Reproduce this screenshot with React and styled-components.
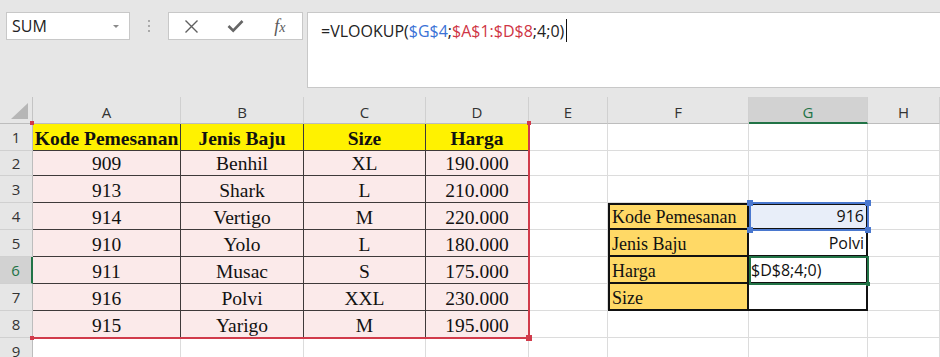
import React from 'react';
import styled, { createGlobalStyle, css } from 'styled-components';

const GlobalStyle = createGlobalStyle`
  body {
    margin: 0;
    background: #ffffff;
    overflow: hidden;
  }
  * {
    box-sizing: border-box;
  }
`;

const COLUMNS = ['A', 'B', 'C', 'D', 'E', 'F', 'G', 'H'];
const COL_WIDTHS = [148, 123, 122, 103, 79, 141, 119];
const ROW_HEIGHTS = [27, 25, 27, 27, 27, 27, 27, 27, 27];
const ACTIVE_COL = 'G';
const ACTIVE_ROW = 6;

const HEADERS = ['Kode Pemesanan', 'Jenis Baju', 'Size', 'Harga'];
const ORDERS = [
  ['909', 'Benhil', 'XL', '190.000'],
  ['913', 'Shark', 'L', '210.000'],
  ['914', 'Vertigo', 'M', '220.000'],
  ['910', 'Yolo', 'L', '180.000'],
  ['911', 'Musac', 'S', '175.000'],
  ['916', 'Polvi', 'XXL', '230.000'],
  ['915', 'Yarigo', 'M', '195.000'],
];

// lookup block sits in F4:G7
const LOOKUP = [
  { label: 'Kode Pemesanan', value: '916', align: 'right' },
  { label: 'Jenis Baju', value: 'Polvi', align: 'right' },
  { label: 'Harga', value: '$D$8;4;0)', align: 'left' },
  { label: 'Size', value: '', align: 'right' },
];
const LOOKUP_START = 4;

// sheet row n -> grid row n + 1, column index i -> grid column i + 2
const placed = css`
  grid-row: ${(p) => p.$r};
  grid-column: ${(p) => p.$c};
`;

export default function App() {
  const renderCell = (row, colIndex) => {
    const col = COLUMNS[colIndex];
    const pos = { key: `${col}${row}`, $r: row + 1, $c: colIndex + 2 };

    if (colIndex < 4 && row === 1) {
      return <HeadCell {...pos}>{HEADERS[colIndex]}</HeadCell>;
    }
    if (colIndex < 4 && row <= 8) {
      return <DataCell {...pos}>{ORDERS[row - 2][colIndex]}</DataCell>;
    }

    const lookupIndex = row - LOOKUP_START;
    if (lookupIndex >= 0 && lookupIndex < LOOKUP.length) {
      const item = LOOKUP[lookupIndex];
      if (col === 'F') {
        return (
          <LabelCell {...pos} $first={lookupIndex === 0}>
            {item.label}
          </LabelCell>
        );
      }
      if (col === 'G') {
        return (
          <ValueCell
            {...pos}
            $first={lookupIndex === 0}
            $align={item.align}
            $selected={lookupIndex === 0}
          >
            {item.value}
          </ValueCell>
        );
      }
    }

    return <GridCell {...pos} />;
  };

  return (
    <Page>
      <GlobalStyle />
      <FormulaBar>
        <NameBox>
          SUM
          <DropArrow />
        </NameBox>
        <Grip>
          <span />
          <span />
          <span />
        </Grip>
        <ActionBox>
          <ActionSlot aria-label="Batal">
            <svg width="15" height="15" viewBox="0 0 15 15">
              <path d="M1.5 1.5 L13.5 13.5 M13.5 1.5 L1.5 13.5" stroke="#5f5f5f" strokeWidth="1.4" fill="none" />
            </svg>
          </ActionSlot>
          <ActionSlot aria-label="Masukkan">
            <svg width="17" height="14" viewBox="0 0 17 14">
              <path d="M1.5 7 L6.2 11.6 L15.5 2" stroke="#666666" strokeWidth="2.6" fill="none" />
            </svg>
          </ActionSlot>
          <ActionSlot aria-label="Sisipkan fungsi">
            <FxGlyph>
              f<sub>x</sub>
            </FxGlyph>
          </ActionSlot>
        </ActionBox>
        <FormulaBox>
          <FormulaText>
            =VLOOKUP(<Ref $color="#3a72d6">$G$4</Ref>;<Ref $color="#cf3545">$A$1:$D$8</Ref>;4;0)
            <Caret />
          </FormulaText>
        </FormulaBox>
      </FormulaBar>

      <Sheet>
        <Corner $r={1} $c={1}>
          <svg width="19" height="17" viewBox="0 0 19 17">
            <path d="M18 0 L18 16 L1 16 Z" fill="#b6b6b6" />
          </svg>
        </Corner>
        {COLUMNS.map((col, i) => (
          <ColHeader key={col} $r={1} $c={i + 2} $active={col === ACTIVE_COL}>
            {col}
          </ColHeader>
        ))}

        {ROW_HEIGHTS.map((_, i) => {
          const row = i + 1;
          return (
            <React.Fragment key={row}>
              <RowHeader $r={row + 1} $c={1} $active={row === ACTIVE_ROW}>
                {row}
              </RowHeader>
              {COLUMNS.map((_, colIndex) => renderCell(row, colIndex))}
            </React.Fragment>
          );
        })}

        <RangeFrame>
          <Handle $color="#d13b4b" $size={4} $v="top" $h="left" />
          <Handle $color="#d13b4b" $size={4} $v="top" $h="right" />
          <Handle $color="#d13b4b" $size={4} $v="bottom" $h="left" />
          <Handle $color="#d13b4b" $size={6} $v="bottom" $h="right" />
        </RangeFrame>

        <SelectFrame $row={LOOKUP_START + 1} $color="#4a78cf">
          <Handle $color="#4a78cf" $size={6} $v="top" $h="left" />
          <Handle $color="#4a78cf" $size={6} $v="top" $h="right" />
          <Handle $color="#4a78cf" $size={6} $v="bottom" $h="left" />
          <Handle $color="#4a78cf" $size={6} $v="bottom" $h="right" />
        </SelectFrame>

        <SelectFrame $row={ACTIVE_ROW + 1} $color="#217346">
          <Handle $color="#217346" $size={4} $v="bottom" $h="right" />
        </SelectFrame>
      </Sheet>
    </Page>
  );
}

const Page = styled.div`
  width: 940px;
  height: 357px;
  overflow: hidden;
  background: #ffffff;
`;

const FormulaBar = styled.div`
  display: flex;
  align-items: flex-start;
  height: 97px;
  padding: 12px 0 0 6px;
  background: #e6e6e6;
  font-family: 'Open Sans', 'Noto Sans', sans-serif;
`;

const NameBox = styled.div`
  position: relative;
  display: flex;
  align-items: center;
  width: 124px;
  height: 28px;
  padding: 0 0 1px 5px;
  background: #ffffff;
  border: 1px solid #c8c8c8;
  font-size: 16px;
  color: #222222;
`;

const DropArrow = styled.span`
  position: absolute;
  right: 10px;
  top: 12px;
  border-left: 3px solid transparent;
  border-right: 3px solid transparent;
  border-top: 3px solid #8a8a8a;
`;

const Grip = styled.div`
  display: flex;
  flex-direction: column;
  align-items: center;
  justify-content: center;
  gap: 3px;
  width: 38px;
  height: 28px;

  span {
    width: 2px;
    height: 2px;
    background: #a9a9a9;
  }
`;

const ActionBox = styled.div`
  display: flex;
  width: 135px;
  height: 28px;
  background: #ffffff;
  border: 1px solid #c8c8c8;
  margin-right: 4px;
`;

const ActionSlot = styled.div`
  display: flex;
  align-items: center;
  justify-content: center;
  width: 45px;
  height: 100%;
`;

const FxGlyph = styled.span`
  font-family: 'Liberation Serif', serif;
  font-style: italic;
  font-size: 18px;
  color: #5a5a5a;
  line-height: 1;

  sub {
    font-size: 14px;
    vertical-align: 0;
  }
`;

const FormulaBox = styled.div`
  flex: 1;
  height: 76px;
  margin-right: -2px;
  padding: 6px 13px;
  background: #ffffff;
  border: 1px solid #c8c8c8;
`;

const FormulaText = styled.div`
  display: flex;
  align-items: center;
  font-size: 16px;
  line-height: 22px;
  color: #222222;
  white-space: pre;
`;

const Ref = styled.span`
  color: ${(p) => p.$color};
`;

const Caret = styled.span`
  display: inline-block;
  width: 1px;
  height: 23px;
  margin-left: 2px;
  background: #111111;
`;

const Sheet = styled.div`
  display: grid;
  grid-template-columns: 33px ${COL_WIDTHS.map((w) => `${w}px`).join(' ')} 1fr;
  grid-template-rows: 27px ${ROW_HEIGHTS.map((h) => `${h}px`).join(' ')};
  background: #ffffff;
`;

const HeaderBase = styled.div`
  ${placed}
  display: flex;
  align-items: center;
  justify-content: center;
  font-family: 'Open Sans', 'Noto Sans', sans-serif;
  font-size: 15px;
  background: ${(p) => (p.$active ? '#d2d2d2' : '#e6e6e6')};
  color: ${(p) => (p.$active ? '#217346' : '#333333')};
`;

const Corner = styled.div`
  ${placed}
  display: flex;
  align-items: flex-end;
  justify-content: flex-end;
  padding: 0 3px 3px 0;
  background: #e6e6e6;
  border-right: 1px solid #c4c4c4;
  border-bottom: 1px solid #bdbdbd;
`;

const ColHeader = styled(HeaderBase)`
  padding-top: 4px;
  border-right: 1px solid #d0d0d0;
  border-bottom: ${(p) => (p.$active ? '2px solid #217346' : '1px solid #bdbdbd')};
`;

const RowHeader = styled(HeaderBase)`
  border-bottom: 1px solid #d0d0d0;
  border-right: ${(p) => (p.$active ? '2px solid #217346' : '1px solid #bdbdbd')};
`;

const GridCell = styled.div`
  ${placed}
  border-right: 1px solid #dcdcdc;
  border-bottom: 1px solid #dcdcdc;
`;

const TableCell = styled.div`
  ${placed}
  display: flex;
  align-items: flex-end;
  justify-content: center;
  overflow: hidden;
  white-space: nowrap;
  font-family: 'Liberation Serif', 'Times New Roman', serif;
  font-size: 19.5px;
  line-height: 1.15;
  color: #111111;
  border-right: 1px solid #3e3a3a;
  border-bottom: 1px solid #3e3a3a;
`;

const HeadCell = styled(TableCell)`
  font-weight: bold;
  background: #fff200;
`;

const DataCell = styled(TableCell)`
  background: #fbeaea;
`;

const LabelCell = styled.div`
  ${placed}
  display: flex;
  align-items: flex-end;
  padding-left: 2px;
  white-space: nowrap;
  font-family: 'Liberation Serif', 'Times New Roman', serif;
  font-size: 18px;
  line-height: 1.15;
  color: #111111;
  background: #ffd966;
  border-left: 2px solid #111111;
  border-right: 2px solid #111111;
  border-bottom: 2px solid #111111;
  border-top: ${(p) => (p.$first ? '2px solid #111111' : 'none')};
`;

const ValueCell = styled.div`
  ${placed}
  display: flex;
  align-items: flex-end;
  justify-content: ${(p) => (p.$align === 'left' ? 'flex-start' : 'flex-end')};
  padding: 0 2px 2px 2px;
  white-space: nowrap;
  font-family: 'Open Sans', 'Noto Sans', sans-serif;
  font-size: 16px;
  line-height: 1.2;
  color: #111111;
  background: ${(p) => (p.$selected ? '#e8eef9' : '#ffffff')};
  border-right: 2px solid #111111;
  border-bottom: 2px solid #111111;
  border-top: ${(p) => (p.$first ? '2px solid #111111' : 'none')};
`;

const RangeFrame = styled.div`
  position: relative;
  grid-column: 2 / 6;
  grid-row: 2 / 10;
  margin: 0 -1px -1px 0;
  border-right: 2px solid #d13b4b;
  border-bottom: 2px solid #d13b4b;
  pointer-events: none;
  z-index: 2;
`;

const SelectFrame = styled.div`
  position: relative;
  grid-column: 8;
  grid-row: ${(p) => p.$row};
  margin: -1px -1px -1px 0;
  border: 2px solid ${(p) => p.$color};
  pointer-events: none;
  z-index: 3;
`;

const Handle = styled.span`
  position: absolute;
  width: ${(p) => p.$size}px;
  height: ${(p) => p.$size}px;
  background: ${(p) => p.$color};
  ${(p) => p.$v}: ${(p) => -Math.ceil(p.$size / 2) - 1}px;
  ${(p) => p.$h}: ${(p) => -Math.ceil(p.$size / 2) - 1}px;
`;
